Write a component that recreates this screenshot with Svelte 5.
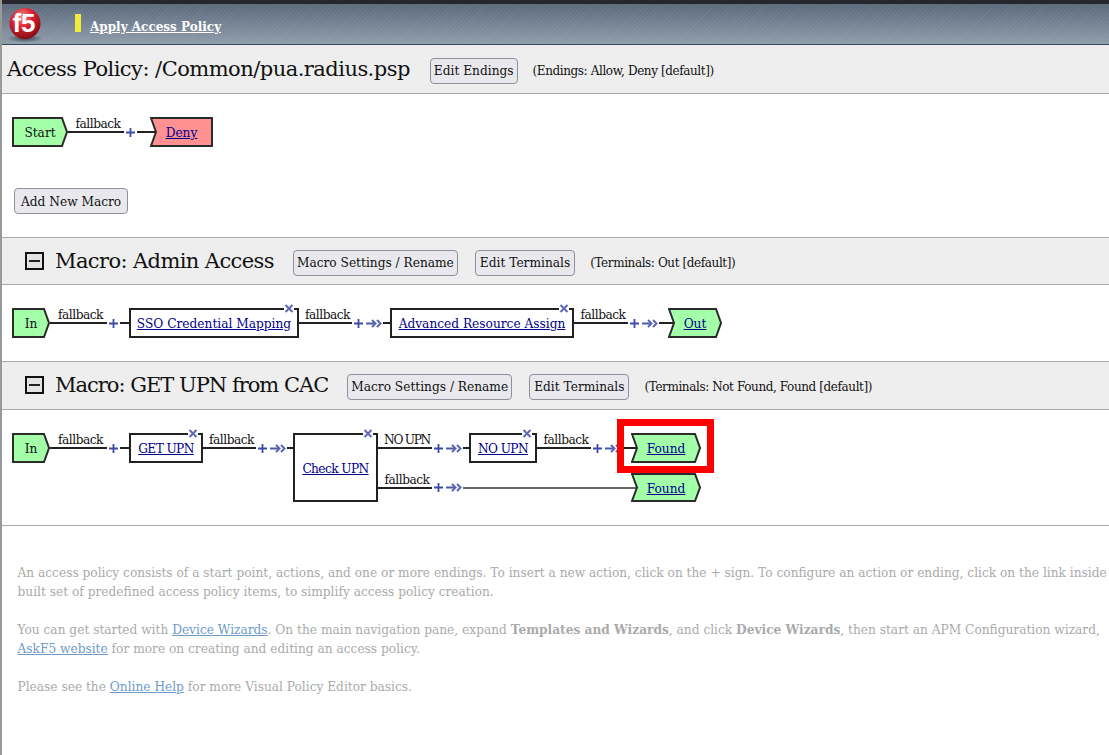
<script lang="ts">
  const greenFill = '#a3ffa8';
  const redFill = '#ff9191';

  const points = (w: number, h: number, notch: boolean, point: boolean): string => {
    const mid = h / 2;
    const left = notch ? `1,1 6,${mid} 1,${h - 1}` : `1,1 1,${h - 1}`;
    const right = point
      ? `${w - 6},${h - 1} ${w - 1},${mid} ${w - 6},1`
      : `${w - 1},${h - 1} ${w - 1},1`;
    return `${left} ${right}`;
  };
  const isCaps = (s: string): boolean => s === s.toUpperCase();
</script>

{#snippet plus()}
  <svg class="plus" width="11" height="11" viewBox="0 0 11 11">
    <path d="M5.5 1v9M1 5.5h9" stroke="#3c4ca6" stroke-width="1.8" fill="none" />
  </svg>
{/snippet}

{#snippet chevrons()}
  <svg class="chev" width="17" height="9" viewBox="0 0 17 9">
    <path d="M0 4.5h8" stroke="#4a5aa8" stroke-width="2" fill="none" />
    <path d="M6 1l3.5 3.5L6 8M11 1l3.5 3.5L11 8" stroke="#5a66b4" stroke-width="2" fill="none" />
  </svg>
{/snippet}

{#snippet conn(label: string, wireW: number, tail: number, arrow: boolean, long = false)}
  <div class="conn">
    <span class="wire" style="width: {wireW}px">
      <span class="wire-label" class:caps={isCaps(label)}>{label}</span>
    </span>
    {@render plus()}
    {#if arrow}{@render chevrons()}{/if}
    <span class="wire" class:grey={long} style="width: {tail}px"></span>
  </div>
{/snippet}

{#snippet term(label: string, w: number, h: number, fill: string, notch: boolean, point: boolean, link: boolean)}
  <div class="term" class:notched={notch} style="width: {w}px; height: {h}px">
    <svg class="term-bg" width={w} height={h} viewBox="0 0 {w} {h}">
      <polygon points={points(w, h, notch, point)} fill={fill} stroke="#2b2b2b" stroke-width="2" />
    </svg>
    {#if link}<a href="#top">{label}</a>{:else}<span>{label}</span>{/if}
  </div>
{/snippet}

{#snippet action(label: string, w: number, h = 30)}
  <div class="action" style="width: {w}px; height: {h}px">
    <a href="#top" class:caps={label.includes('UPN')}>{label}</a>
    <svg class="remove" width="10" height="9" viewBox="0 0 10 9">
      <rect width="10" height="9" fill="#fff" />
      <path d="M1.5 1l7 7M8.5 1l-7 7" stroke="#5f68b4" stroke-width="2" />
    </svg>
  </div>
{/snippet}

{#snippet macroHead(title: string, note: string, tight = false)}
  <header class="macro-head" class:tall={tight}>
    <span class="collapse"><i></i></span>
    <h2 class:tight>{title}</h2>
    <button class="settings">Macro Settings / Rename</button>
    <button class="terminals">Edit Terminals</button>
    <span class="note">{note}</span>
  </header>
{/snippet}

<div class="page">
  <nav class="topbar">
    <svg class="logo" width="40" height="40" viewBox="0 0 40 40">
      <defs>
        <radialGradient id="ball" cx="0.4" cy="0.28" r="0.78">
          <stop offset="0" stop-color="#f58a8f" />
          <stop offset="0.45" stop-color="#d8202e" />
          <stop offset="1" stop-color="#7a0b14" />
        </radialGradient>
        <radialGradient id="shade">
          <stop offset="0" stop-color="#2b3440" stop-opacity="0.85" />
          <stop offset="1" stop-color="#2b3440" stop-opacity="0" />
        </radialGradient>
      </defs>
      <ellipse cx="20" cy="34.5" rx="18" ry="4" fill="url(#shade)" />
      <circle cx="20" cy="19.5" r="15.5" fill="url(#ball)" />
      <text x="19" y="28" text-anchor="middle" class="logo-text">f5</text>
    </svg>
    <span class="marker"></span>
    <a class="apply" href="#top">Apply Access Policy</a>
  </nav>

  <header class="policy-head">
    <h1>Access Policy: /Common/pua.radius.psp</h1>
    <button>Edit Endings</button>
    <span class="note">(Endings: Allow, Deny [default])</span>
  </header>

  <section class="main-flow">
    <div class="flow">
      {@render term('Start', 56, 30, greenFill, false, true, false)}
      {@render conn('fallback', 56, 18, false)}
      {@render term('Deny', 63, 30, redFill, true, false, true)}
    </div>
    <button class="add">Add New Macro</button>
  </section>

  {@render macroHead('Macro: Admin Access', '(Terminals: Out [default])')}
  <section class="macro-body short">
    <div class="flow">
      {@render term('In', 38, 30, greenFill, false, true, false)}
      {@render conn('fallback', 57, 9, false)}
      {@render action('SSO Credential Mapping', 170)}
      {@render conn('fallback', 53, 7, true)}
      {@render action('Advanced Resource Assign', 184)}
      {@render conn('fallback', 54, 14, true)}
      {@render term('Out', 54, 30, greenFill, true, true, true)}
    </div>
  </section>

  {@render macroHead('Macro: GET UPN from CAC', '(Terminals: Not Found, Found [default])', true)}
  <section class="macro-body">
    <div class="flow top">
      <div class="flow">
        {@render term('In', 38, 30, greenFill, false, true, false)}
        {@render conn('fallback', 57, 9, false)}
        {@render action('GET UPN', 74)}
        {@render conn('fallback', 53, 6, true)}
      </div>
      {@render action('Check UPN', 85, 69)}
      <div class="branches">
        <div class="flow">
          {@render conn('NO UPN', 54, 6, true)}
          {@render action('NO UPN', 68)}
          {@render conn('fallback', 54, 14, true)}
          <div class="marked">
            {@render term('Found', 70, 30, greenFill, true, true, true)}
            <span class="highlight"></span>
          </div>
        </div>
        <div class="flow">
          {@render conn('fallback', 54, 173, true, true)}
          {@render term('Found', 70, 29, greenFill, true, true, true)}
        </div>
      </div>
    </div>
  </section>

  <section class="help">
    <p>An access policy consists of a start point, actions, and one or more endings. To insert a new action, click on the + sign. To configure an action or ending, click on the link inside<br />built set of predefined access policy items, to simplify access policy creation.</p>
    <p>You can get started with <a href="#top">Device Wizards</a>. On the main navigation pane, expand <b>Templates and Wizards</b>, and click <b>Device Wizards</b>, then start an APM Configuration wizard,<br /><a href="#top">AskF5 website</a> for more on creating and editing an access policy.</p>
    <p>Please see the <a href="#top">Online Help</a> for more Visual Policy Editor basics.</p>
  </section>
</div>

<style>
  :global(body) {
    margin: 0;
    background: #fff;
    overflow: hidden;
  }
  .page {
    width: 1109px;
    height: 755px;
    box-sizing: border-box;
    border-left: 2px solid #999;
    overflow: hidden;
    font-family: "DejaVu Serif", "Liberation Serif", serif;
    font-size: 12.2px;
    color: #111;
  }
  a {
    color: #00008b;
  }
  .caps {
    letter-spacing: -0.6px;
  }
  .topbar {
    height: 40px;
    border-top: 4px solid #26262c;
    border-bottom: 1px solid #3b4a5a;
    display: flex;
    align-items: center;
    background:
      repeating-linear-gradient(135deg, rgba(255, 255, 255, 0.05) 0 1px, transparent 1px 3px),
      linear-gradient(#5b6a7c, #8f9cab);
  }
  .logo {
    margin-left: 3px;
    flex: none;
  }
  .logo-text {
    font-family: "Liberation Sans", sans-serif;
    font-size: 26px;
    font-weight: 700;
    fill: #fff;
  }
  .marker {
    width: 6px;
    height: 18px;
    background: #f2ea3c;
    margin-left: 30px;
    margin-top: -3px;
  }
  .apply {
    margin-left: 9px;
    margin-top: 6px;
    color: #fff;
    font-weight: 700;
    font-size: 12px;
  }
  .policy-head {
    height: 49px;
    box-sizing: border-box;
    background: #eee;
    border-bottom: 1px solid #aaa;
    display: flex;
    align-items: center;
    padding-left: 5px;
  }
  h1 {
    margin: 0 20px 0 0;
    font-weight: 400;
    font-size: 21px;
    letter-spacing: -0.53px;
  }
  h2 {
    margin: 0 19px 0 0;
    font-weight: 400;
    font-size: 21px;
    letter-spacing: -0.6px;
  }
  h2.tight {
    letter-spacing: -1px;
  }
  button {
    font: inherit;
    height: 26px;
    padding: 1px 3px 0;
    margin-top: 3px;
    color: #111;
    background: #e9e9ed;
    border: 1px solid #8f8f9d;
    border-radius: 4px;
  }
  .note {
    margin-left: 15px;
    margin-top: 4px;
    font-size: 12px;
    letter-spacing: -0.4px;
  }
  .main-flow {
    height: 144px;
    box-sizing: border-box;
    padding: 23px 0 0 10px;
    border-bottom: 1px solid #aaa;
  }
  .add {
    display: block;
    margin: 41px 0 0 2px;
    padding: 1px 6px 0;
  }
  .macro-head {
    height: 47px;
    box-sizing: border-box;
    background: #eee;
    border-bottom: 1px solid #aaa;
    display: flex;
    align-items: center;
    padding-left: 23px;
  }
  .macro-head.tall {
    height: 48px;
    padding-bottom: 1px;
  }
  .macro-head .settings {
    margin-right: 17px;
  }
  .macro-head .terminals {
    padding: 1px 4px 0;
  }
  .collapse {
    width: 19px;
    height: 18px;
    box-sizing: border-box;
    border: 2px solid #111;
    background: #e4e4e4;
    display: flex;
    align-items: center;
    justify-content: center;
    margin-right: 11px;
  }
  .collapse i {
    width: 11px;
    height: 2px;
    background: #222;
  }
  .macro-body {
    padding: 23px 0 0 10px;
    height: 116px;
    box-sizing: border-box;
    border-bottom: 1px solid #aaa;
  }
  .macro-body.short {
    height: 77px;
  }
  .flow {
    display: flex;
    align-items: center;
  }
  .flow.top {
    align-items: flex-start;
  }
  .branches {
    display: flex;
    flex-direction: column;
    gap: 10px;
  }
  .conn {
    display: flex;
    align-items: center;
    flex: none;
  }
  .wire {
    display: block;
    position: relative;
    height: 2px;
    background: #222;
    flex: none;
  }
  .wire.grey {
    background: #666;
  }
  .wire-label {
    position: absolute;
    left: 4px;
    right: 0;
    bottom: 1px;
    text-align: center;
    white-space: nowrap;
    line-height: 15px;
    letter-spacing: -0.5px;
  }
  .wire-label.caps {
    letter-spacing: -1.3px;
  }
  .plus {
    margin: 0 1px;
    flex: none;
  }
  .chev {
    flex: none;
    margin-left: 1px;
  }
  .term {
    position: relative;
    flex: none;
    display: flex;
    align-items: center;
    justify-content: center;
    box-sizing: border-box;
    padding-top: 2px;
  }
  .term.notched {
    margin-left: -5px;
  }
  .term-bg {
    position: absolute;
    left: 0;
    top: 0;
  }
  .term a,
  .term span {
    position: relative;
  }
  .action {
    position: relative;
    flex: none;
    box-sizing: border-box;
    border: 2px solid #222;
    background: #fff;
    display: flex;
    align-items: center;
    justify-content: center;
    white-space: nowrap;
    padding-top: 2px;
  }
  .remove {
    position: absolute;
    right: 3px;
    top: -6px;
  }
  .marked {
    position: relative;
    flex: none;
  }
  .highlight {
    position: absolute;
    left: -19px;
    right: -13px;
    top: -14px;
    bottom: -10px;
    border: 7px solid #f00;
  }
  .help {
    padding: 38px 0 0 15.5px;
    color: #aaa;
    white-space: nowrap;
    line-height: 19px;
  }
  .help p {
    margin: 0 0 19px;
  }
  .help a {
    color: #6d9ac8;
  }
</style>
